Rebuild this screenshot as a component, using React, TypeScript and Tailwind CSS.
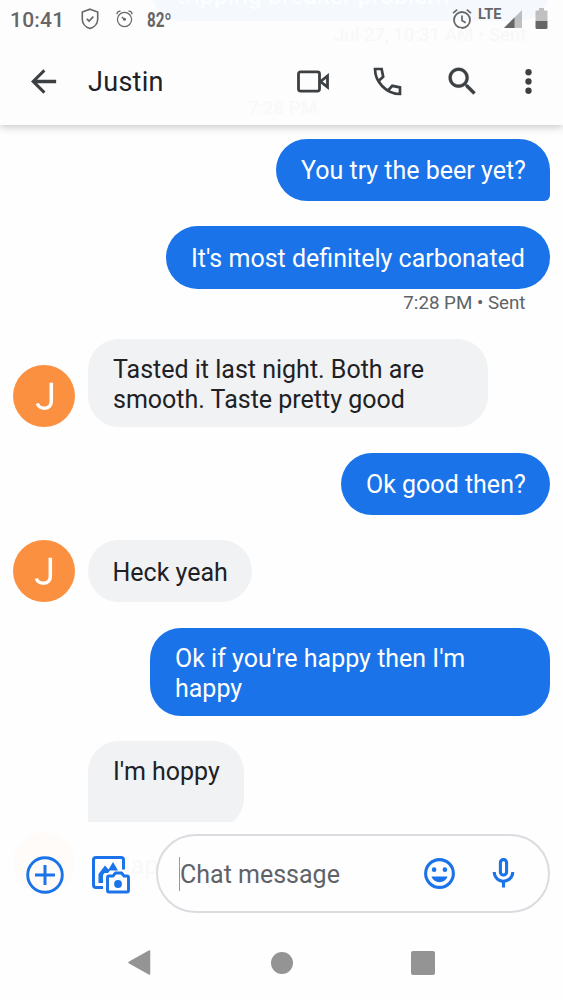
import type { ReactNode } from "react";

function Svg({ children, className, box = "0 0 24 24" }: { children: ReactNode; className: string; box?: string }) {
  return (
    <svg viewBox={box} className={className} fill="currentColor" aria-hidden="true">
      {children}
    </svg>
  );
}

function StatusBar() {
  return (
    <div className="relative flex h-[38px] shrink-0 items-start overflow-hidden text-[#666]">
      <div className="absolute left-[151px] top-[-42px] h-[63px] w-[399px] rounded-[31px] bg-[#f5f9fe]" />
      <div className="absolute left-[177px] top-[-19px] whitespace-nowrap text-[25px] leading-[30px] text-[#fdfeff]">
        tripping breaker problem
      </div>
      <div className="relative flex w-full items-start">
        <span className="ml-[10px] mt-[7px] w-[54px] whitespace-nowrap text-[21px] font-medium leading-[26px] tracking-[0.2px]">10:41</span>
        <Svg className="ml-[17px] mt-[8px] h-[22px] w-[18px]" box="0 0 18 22">
          <path d="M9 1.2 16.700 4v7.200c0 4.300-3.300 8-7.700 9.400-4.400-1.400-7.700-5.100-7.700-9.400V4z" fill="none" stroke="currentColor" strokeWidth="1.600" />
          <path d="m5.800 10.800 2.300 2.300 4.200-4.400" fill="none" stroke="currentColor" strokeWidth="1.700" />
        </Svg>
        <Svg className="ml-[17px] mt-[10px] h-[18px] w-[17px]" box="0 0 17 18">
          <circle cx="8.500" cy="9.500" r="7.100" fill="none" stroke="currentColor" strokeWidth="1.200" />
          <path d="M1 4.200C1 2 2.500 1 4.500 1.200M16 4.200C16 2 14.500 1 12.500 1.200M8.500 9.500 5.800 6.900" fill="none" stroke="currentColor" strokeWidth="1.400" />
          <circle cx="8.500" cy="9.300" r="1.500" />
        </Svg>
        <span className="ml-[14px] mt-[9px] origin-left scale-x-[0.76] text-[20px] font-bold leading-[22px]">82º</span>
      </div>
      <Svg className="absolute left-[452px] top-[8px] h-[22px] w-[20px]" box="0 0 20 22">
        <circle cx="10" cy="12" r="8" fill="none" stroke="currentColor" strokeWidth="1.800" />
        <path d="M10 7.500v5l3.700 2.200M1 5.200 5.200 1.700M19 5.200l-4.200-3.500" fill="none" stroke="currentColor" strokeWidth="1.700" />
      </Svg>
      <span className="absolute left-[478px] top-[6px] text-[14.500px] font-bold leading-[18px]">LTE</span>
      <Svg className="absolute left-[504px] top-[9px] h-[19px] w-[19px]" box="0 0 19 19">
        <path d="M0 19 18 1v18z" opacity=".4" />
        <path d="M0 19 10.500 8.500V19z" />
      </Svg>
      <Svg className="absolute left-[535px] top-[8px] h-[21px] w-[13px]" box="0 0 13 21">
        <path d="M4 0h5v2.500h2.500q1 0 1 1V13H.5V3.500q0-1 1-1H4z" opacity=".4" />
        <path d="M.5 13h12v6.500q0 1.500-1.500 1.500H2q-1.500 0-1.500-1.500z" />
      </Svg>
    </div>
  );
}

function Header() {
  return (
    <header className="relative z-10 flex h-[125px] shrink-0 flex-col bg-[#fdfdfd] text-[#3c4043] shadow-[0_2px_8px_rgba(0,0,0,0.22)]">
      <StatusBar />
      <span className="absolute left-[334px] top-[25px] whitespace-nowrap text-[18.750px] leading-[20px] text-[#f7f7f7]">Jul 27, 10:31 AM • Sent</span>
      <span className="absolute left-[248px] top-[98px] whitespace-nowrap text-[18.750px] leading-[20px] text-[#f8f8f8]">7:28 PM</span>
      <div className="relative flex h-[87px] items-center">
        <Svg className="ml-[25px] h-[37px] w-[37px]">
          <path d="M20.200 10.900H7.830l5.400-5.400L11.900 4l-8 8 8 8 1.400-1.500-5.400-5.400H20.200z" />
        </Svg>
        <h1 className="ml-[26px] flex-1 text-[27px] leading-[32px] tracking-[0.3px] text-[#202124]">Justin</h1>
        <Svg className="mr-[39px] h-[23px] w-[33px]" box="0 0 33 23">
          <path d="M3.500 1.900H20.500q2 0 2 2v15.200q0 2-2 2H3.500q-2 0-2-2V3.900q0-2 2-2z" fill="none" stroke="currentColor" strokeWidth="2.800" />
          <path d="M23.500 11.500 30.500 6v11z" fill="none" stroke="currentColor" strokeWidth="2.800" />
        </Svg>
        <Svg className="mr-[38px] h-[37px] w-[37px]">
          <path d="M3.900 3.900h4.300l1 5-3 2.700c1.400 2.700 3.500 4.800 6.200 6.200l2.700-3 5 1v4.300C11.500 20.100 3.900 12.500 3.900 3.900z" fill="none" stroke="currentColor" strokeWidth="1.750" />
        </Svg>
        <Svg className="mr-[29px] h-[37px] w-[37px]">
          <path d="M15.500 14h-.790l-.280-.270C15.410 12.590 16 11.110 16 9.500 16 5.910 13.090 3 9.500 3S3 5.910 3 9.500 5.910 16 9.500 16c1.610 0 3.090-.590 4.230-1.570l.270.280v.790l5 4.990L20.490 19l-4.990-5zm-6 0C7.010 14 5 11.990 5 9.500S7.010 5 9.500 5 14 7.010 14 9.500 11.990 14 9.500 14z" stroke="currentColor" strokeWidth=".2" />
        </Svg>
        <Svg className="mr-[16px] h-[37px] w-[37px]">
          <circle cx="12" cy="6" r="2.050" />
          <circle cx="12" cy="12" r="2.050" />
          <circle cx="12" cy="18" r="2.050" />
        </Svg>
      </div>
    </header>
  );
}

function Avatar() {
  return (
    <div className="mr-[13px] flex h-[62px] w-[62px] shrink-0 items-center justify-center rounded-full bg-[#fb9140] text-white">
      <Svg className="h-[29px] w-[19px]" box="0 0 19 29">
        <path d="M16.300 .8v18.700c0 8-11.500 9-14 2" fill="none" stroke="currentColor" strokeWidth="3.500" />
      </Svg>
    </div>
  );
}

function Chat() {
  return (
    <main className="h-[697px] shrink-0 overflow-hidden pt-[14px] text-[25px] leading-[30px] text-white">
      <div className="flex flex-col items-end pr-[13px]">
        <p className="h-[62px] w-[274px] whitespace-nowrap rounded-[31px] rounded-br-[6px] bg-[#1a73e8] px-[25px] pt-[17px]">You try the beer yet?</p>
        <p className="mt-[25px] h-[62.500px] w-[384px] whitespace-nowrap rounded-[32px] bg-[#1a73e8] px-[25px] pt-[18px]">It's most definitely carbonated</p>
        <span className="mr-[24.500px] h-[50.500px] pt-[3px] text-[18.750px] leading-[22px] text-[#5f6368]">7:28 PM • Sent</span>
      </div>
      <div className="flex items-end pl-[13px] text-[#202124]">
        <Avatar />
        <p className="h-[88px] w-[400px] rounded-[31px] bg-[#f1f2f4] pl-[25px] pt-[16px]">Tasted it last night. Both are<br />smooth. Taste pretty good</p>
      </div>
      <div className="flex justify-end pr-[13px] pt-[26px]">
        <p className="h-[62px] w-[209px] whitespace-nowrap rounded-[31px] bg-[#1a73e8] pl-[25px] pt-[17px]">Ok good then?</p>
      </div>
      <div className="flex items-end pl-[12.500px] pt-[25px] text-[#202124]">
        <Avatar />
        <p className="h-[62px] w-[164px] whitespace-nowrap rounded-[31px] bg-[#f1f2f4] pl-[25px] pt-[18px]">Heck yeah</p>
      </div>
      <div className="flex justify-end pr-[13px] pt-[26px]">
        <p className="h-[88px] w-[400px] rounded-[31px] bg-[#1a73e8] pl-[25px] pt-[16px]">Ok if you're happy then I'm<br />happy</p>
      </div>
      <div className="pl-[88px] pt-[25px] text-[#202124]">
        <p className="h-[88px] w-[156px] whitespace-nowrap rounded-[31px] rounded-bl-[6px] bg-[#f1f2f4] pl-[25px] pt-[16px]">I'm hoppy</p>
      </div>
    </main>
  );
}

function Composer() {
  return (
    <div className="relative flex h-[103px] shrink-0 items-start text-[#1a73e8]">
      <div className="absolute left-[13px] top-[10px] h-[62px] w-[62px] rounded-full bg-[#fffbf8]" />
      <span className="absolute left-[113px] top-[29px] text-[25px] leading-[30px] text-[#f9f9fa]">Hap</span>
      <Svg className="relative ml-[26px] mt-[34px] h-[38px] w-[38px]" box="0 0 38 38">
        <circle cx="19" cy="19" r="17.300" fill="none" stroke="currentColor" strokeWidth="2.900" />
        <path d="M19 9v20M9 19h20" stroke="currentColor" strokeWidth="3" />
      </Svg>
      <Svg className="relative ml-[28px] mt-[34px] h-[38px] w-[38px]" box="0 0 38 38">
        <path d="M31.500 13.500V4q0-2.500-2.500-2.500H4Q1.500 1.500 1.500 4v25q0 2.500 2.500 2.500h7" fill="none" stroke="currentColor" strokeWidth="3" />
        <path d="M6.500 27v-9l6.500-8.500 3.500 4 4.500-7.500 5 8.500H18l-2 2.500h-3.500L11 19v8z" />
        <path d="M17 20h4l2.500-3h6l2.500 3h3q1.500 0 1.500 1.500V34.500q0 1.500-1.500 1.500H17q-1.500 0-1.500-1.500V21.500Q15.500 20 17 20z" fill="none" stroke="currentColor" strokeWidth="2.900" />
        <circle cx="26" cy="28" r="3.900" />
      </Svg>
      <div className="relative ml-[26px] mt-[12px] flex h-[79px] w-[394px] items-center rounded-[40px] border-2 border-[#dadce0] bg-[#fefefe]">
        <span className="ml-[21px] h-[34px] w-px bg-[#999]" />
        <span className="flex-1 whitespace-nowrap pt-[2px] text-[25px] leading-[30px] text-[#5f6368]">Chat message</span>
        <Svg className="mr-[27px] h-[37px] w-[37px]">
          <circle cx="12" cy="12" r="9" fill="none" stroke="currentColor" strokeWidth="2" />
          <circle cx="8.500" cy="9.500" r="1.500" />
          <circle cx="15.500" cy="9.500" r="1.500" />
          <path d="M6.800 14h10.400c-.8 2.300-2.800 3.700-5.200 3.700S7.600 16.300 6.800 14z" />
        </Svg>
        <Svg className="mr-[26px] h-[37px] w-[37px]">
          <path d="M12 14c1.660 0 3-1.340 3-3V5c0-1.660-1.340-3-3-3S9 3.340 9 5v6c0 1.660 1.340 3 3 3zm-1-9c0-.550.450-1 1-1s1 .450 1 1v6c0 .550-.450 1-1 1s-1-.450-1-1V5zm6 6c0 2.760-2.240 5-5 5s-5-2.240-5-5H5c0 3.530 2.610 6.430 6 6.920V21h2v-3.080c3.390-.490 6-3.390 6-6.920h-2z" />
        </Svg>
      </div>
    </div>
  );
}

function NavBar() {
  return (
    <nav className="flex h-[75px] items-center text-[#949494]">
      <Svg className="ml-[128px] h-[26px] w-[23px]" box="0 0 23 26">
        <path d="M1 12.500 21.500 1v23z" stroke="currentColor" strokeWidth="1.500" strokeLinejoin="round" />
      </Svg>
      <span className="ml-[119.500px] h-[22px] w-[22px] rounded-full bg-[#949494]" />
      <span className="ml-[118px] h-[24px] w-[24px] rounded-[2px] bg-[#949494]" />
    </nav>
  );
}

export default function App() {
  return (
    <div className="flex h-[1000px] w-[563px] flex-col overflow-hidden bg-[#fefefe] font-['Roboto',sans-serif]">
      <Header />
      <Chat />
      <Composer />
      <NavBar />
    </div>
  );
}
